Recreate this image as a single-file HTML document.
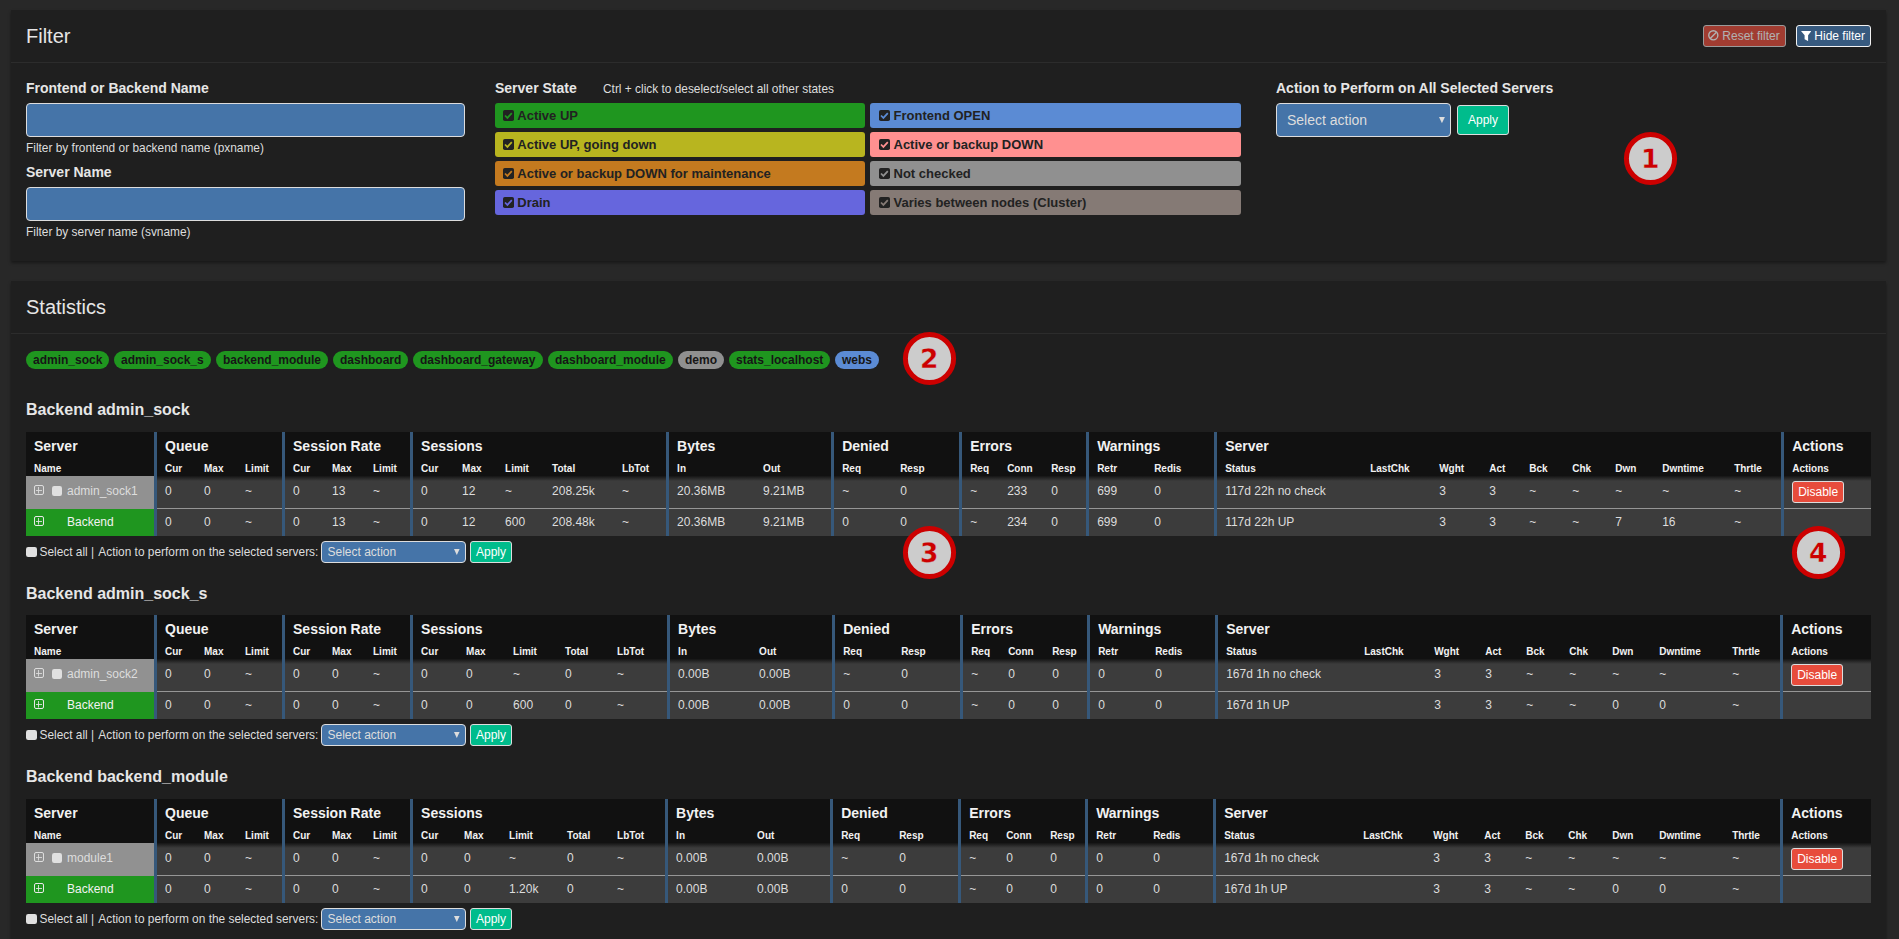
<!DOCTYPE html>
<html lang="en"><head><meta charset="utf-8"><title>HAProxy Statistics</title>
<style>
*{box-sizing:border-box}
html,body{margin:0;padding:0}
body{width:1899px;height:939px;overflow:hidden;position:relative;background:#282828;color:#ddd;
 font-family:"Liberation Sans",Arial,Helvetica,sans-serif;font-size:14px;line-height:20px}
.abs{position:absolute}
.panel{position:absolute;left:11px;width:1875px;background:#1f1f1f;box-shadow:0 2px 3px rgba(0,0,0,.4)}
.panel h3{position:absolute;left:15px;top:15px;margin:0;font-size:20px;line-height:22px;font-weight:400;color:#e6e6e6}
.panel .hr{position:absolute;left:0;right:0;top:52px;height:1px;background:#2c2c2c}
.lbl{position:absolute;font-weight:700;font-size:14px;line-height:20px;color:#e6e6e6;white-space:nowrap}
.help{position:absolute;font-size:11.9px;line-height:16px;color:#ddd;white-space:nowrap}
.inp{position:absolute;margin:0;padding:0 12px;outline:0;font:inherit;color:#ddd;background:#4574a8;border:1px solid #ddd;border-radius:4px}
.st{position:absolute;height:25px;border-radius:3px;font-weight:700;font-size:13px;line-height:25px;color:#222;white-space:nowrap}
.st svg{position:absolute;left:8px;top:7px}
.st span{position:absolute;left:22.3px;top:0}
.btn{position:absolute;margin:0;font-family:inherit;appearance:none;-webkit-appearance:none;cursor:pointer;border:1px solid #ddd;border-radius:3px;font-size:12px;line-height:18px;text-align:center;white-space:nowrap;color:#fff}
.badge{position:absolute;top:351px;height:18px;border-radius:10px;padding:3px 7px;font-size:12px;line-height:12px;font-weight:700;color:#161616;background:#1f961f;white-space:nowrap}
h4{position:absolute;left:26px;margin:0;font-size:16px;line-height:18px;font-weight:700;color:#e6e6e6;white-space:nowrap}
table{position:absolute;left:26px;width:1845px;border-collapse:separate;border-spacing:0;table-layout:fixed;font-size:12px;line-height:17px;color:#ddd}
th,td{padding:0 0 0 8px;text-align:left;white-space:nowrap;overflow:visible;vertical-align:top}
th{background:#111;color:#f2f2f2;font-weight:700}
tr.g th{height:24px;font-size:14px;line-height:20px;padding-top:3.7px}
tr.s th{height:20px;font-size:10px;line-height:14px;padding-top:6.4px}
td{background:#3c3c3c}
tr.r1 td{height:32px;padding-top:7px;background:linear-gradient(#151515,#3c3c3c 5px)}
tr.r2 td{height:28px;padding-top:6px;background-image:linear-gradient(#969696,#969696);background-size:100% 1px;background-repeat:no-repeat}
.b{border-left:3px solid #36587a;padding-left:8px}
tr.r1 td.nm{background:#919191;color:#ddd;padding-top:6.6px}
tr.r2 td.nm{background:#1f961f linear-gradient(#919191,#919191) 0 0/100% 1px no-repeat;color:#f2f2f2;padding-top:6px}
td.nm{position:relative}
td.nm span{position:absolute;left:41px}
td.nm svg{position:absolute;left:8px}
td.nm input{appearance:none;-webkit-appearance:none;margin:0;padding:0;border:0;position:absolute;left:25.5px;width:10.8px;height:10.7px;border-radius:2.2px;background:#e0e0e0}
td.ac{position:relative}
.sel{position:absolute;margin:0;padding:0;outline:0;font-family:inherit;appearance:none;-webkit-appearance:none;background:#4574a8;border:1px solid #ddd;border-radius:4px;color:#ddd;white-space:nowrap}
.cb{appearance:none;-webkit-appearance:none;margin:0;padding:0;border:0;position:absolute;width:10.7px;height:10.7px;border-radius:2.2px;background:#e0e0e0}
.foot{position:absolute;left:39.5px;font-size:11.9px;line-height:17px;color:#ddd;white-space:nowrap}
</style></head>
<body>
<div class="panel" style="top:10px;height:251px"><h3>Filter</h3><div class="hr"></div></div>
<button type="button" disabled class="btn" style="left:1703px;top:25px;width:83px;height:22px;padding:1px 0 1px 4.5px;text-align:left;background:#e74c3c;opacity:.65"><svg class="abs" style="left:4.1px;top:4.4px" width="10.6" height="10.6" viewBox="0 0 10.6 10.6"><circle cx="5.3" cy="5.3" r="4.55" fill="none" stroke="#fff" stroke-width="1.4"/><path d="M2.2 8.4L8.4 2.2" stroke="#fff" stroke-width="1.4"/></svg><span style="margin-left:13.8px">Reset filter</span></button>
<button type="button" class="btn" style="left:1796px;top:25px;width:75px;height:22px;padding:1px 0 1px 4px;text-align:left;background:#375a7f;border-color:#f2f2f2"><svg class="abs" style="left:4px;top:5px" width="10.3" height="10.1" viewBox="0 0 10.3 10.1"><path d="M0 0H10.3L7.1 4.3V10.1L3.6 8.2V4.3Z" fill="#fff"/></svg><span style="margin-left:13.3px">Hide filter</span></button>
<label class="lbl" style="left:26px;top:78px">Frontend or Backend Name</label>
<input type="text" class="inp" aria-label="Frontend or Backend Name" style="left:26px;top:103px;width:439px;height:34px">
<div class="help" style="left:26px;top:140px">Filter by frontend or backend name (pxname)</div>
<label class="lbl" style="left:26px;top:162px">Server Name</label>
<input type="text" class="inp" aria-label="Server Name" style="left:26px;top:187px;width:439px;height:34px">
<div class="help" style="left:26px;top:224px">Filter by server name (svname)</div>
<div class="lbl" style="left:495px;top:78px">Server State</div>
<div class="help" style="left:603px;top:81px">Ctrl + click to deselect/select all other states</div>
<div class="st" style="left:495px;top:103px;width:370px;background:#1f961f"><svg width="11" height="11" viewBox="0 0 11 11"><rect x="0" y="0" width="11" height="11" rx="1.8" fill="#222"/><path d="M2 5.5L4.4 7.9L8.8 3.2" stroke="#1f961f" stroke-width="1.75" fill="none"/></svg><span>Active UP</span></div>
<div class="st" style="left:495px;top:132px;width:370px;background:#b8b51f"><svg width="11" height="11" viewBox="0 0 11 11"><rect x="0" y="0" width="11" height="11" rx="1.8" fill="#222"/><path d="M2 5.5L4.4 7.9L8.8 3.2" stroke="#b8b51f" stroke-width="1.75" fill="none"/></svg><span>Active UP, going down</span></div>
<div class="st" style="left:495px;top:161px;width:370px;background:#c47a1f"><svg width="11" height="11" viewBox="0 0 11 11"><rect x="0" y="0" width="11" height="11" rx="1.8" fill="#222"/><path d="M2 5.5L4.4 7.9L8.8 3.2" stroke="#c47a1f" stroke-width="1.75" fill="none"/></svg><span>Active or backup DOWN for maintenance</span></div>
<div class="st" style="left:495px;top:190px;width:370px;background:#6666dd"><svg width="11" height="11" viewBox="0 0 11 11"><rect x="0" y="0" width="11" height="11" rx="1.8" fill="#222"/><path d="M2 5.5L4.4 7.9L8.8 3.2" stroke="#6666dd" stroke-width="1.75" fill="none"/></svg><span>Drain</span></div>
<div class="st" style="left:870px;top:103px;width:371px;background:#5b8bd4"><svg style="left:8.6px" width="11" height="11" viewBox="0 0 11 11"><rect x="0" y="0" width="11" height="11" rx="1.8" fill="#222"/><path d="M2 5.5L4.4 7.9L8.8 3.2" stroke="#5b8bd4" stroke-width="1.75" fill="none"/></svg><span style="left:23.5px">Frontend OPEN</span></div>
<div class="st" style="left:870px;top:132px;width:371px;background:#ff9090"><svg style="left:8.6px" width="11" height="11" viewBox="0 0 11 11"><rect x="0" y="0" width="11" height="11" rx="1.8" fill="#222"/><path d="M2 5.5L4.4 7.9L8.8 3.2" stroke="#ff9090" stroke-width="1.75" fill="none"/></svg><span style="left:23.5px">Active or backup DOWN</span></div>
<div class="st" style="left:870px;top:161px;width:371px;background:#909090"><svg style="left:8.6px" width="11" height="11" viewBox="0 0 11 11"><rect x="0" y="0" width="11" height="11" rx="1.8" fill="#222"/><path d="M2 5.5L4.4 7.9L8.8 3.2" stroke="#909090" stroke-width="1.75" fill="none"/></svg><span style="left:23.5px">Not checked</span></div>
<div class="st" style="left:870px;top:190px;width:371px;background:#857a75"><svg style="left:8.6px" width="11" height="11" viewBox="0 0 11 11"><rect x="0" y="0" width="11" height="11" rx="1.8" fill="#222"/><path d="M2 5.5L4.4 7.9L8.8 3.2" stroke="#857a75" stroke-width="1.75" fill="none"/></svg><span style="left:23.5px">Varies between nodes (Cluster)</span></div>
<div class="lbl" style="left:1276px;top:78px">Action to Perform on All Selected Servers</div>
<select class="sel" style="left:1276px;top:103px;width:175px;height:34px;font-size:14px;line-height:32px;padding-left:10px"><option>Select action</option></select><svg class="abs" style="left:1439.2px;top:116.8px;pointer-events:none" width="5.9" height="6.2" viewBox="0 0 59 62"><path d="M0 0H59L29.5 62Z" fill="#ddd"/></svg>
<button type="button" class="btn" style="left:1457px;top:105px;width:52px;height:30px;padding:5px 0;background:#00bc8c">Apply</button>
<div class="panel" style="top:281px;height:700px"><h3>Statistics</h3><div class="hr"></div></div>
<div class="badge" style="left:26px;width:83px;background:#1f961f">admin_sock</div>
<div class="badge" style="left:114px;width:97px;background:#1f961f">admin_sock_s</div>
<div class="badge" style="left:216px;width:112px;background:#1f961f">backend_module</div>
<div class="badge" style="left:333px;width:75px;background:#1f961f">dashboard</div>
<div class="badge" style="left:413px;width:130px;background:#1f961f">dashboard_gateway</div>
<div class="badge" style="left:548px;width:125px;background:#1f961f">dashboard_module</div>
<div class="badge" style="left:678px;width:46px;background:#909090">demo</div>
<div class="badge" style="left:729px;width:101px;background:#1f961f">stats_localhost</div>
<div class="badge" style="left:835px;width:44px;background:#5b8bd4">webs</div>
<h4 style="top:401px">Backend admin_sock</h4>
<table style="top:432px"><colgroup>
<col style="width:128px">
<col style="width:42px">
<col style="width:41px">
<col style="width:45px">
<col style="width:42px">
<col style="width:41px">
<col style="width:45px">
<col style="width:44px">
<col style="width:43px">
<col style="width:47px">
<col style="width:70px">
<col style="width:52px">
<col style="width:89px">
<col style="width:76px">
<col style="width:61px">
<col style="width:67px">
<col style="width:40px">
<col style="width:44px">
<col style="width:43px">
<col style="width:60px">
<col style="width:68px">
<col style="width:148px">
<col style="width:69px">
<col style="width:50px">
<col style="width:40px">
<col style="width:43px">
<col style="width:43px">
<col style="width:47px">
<col style="width:72px">
<col style="width:55px">
<col style="width:90px">
</colgroup><thead><tr class="g">
<th colspan="1">Server</th>
<th colspan="3" class="b">Queue</th>
<th colspan="3" class="b">Session Rate</th>
<th colspan="5" class="b">Sessions</th>
<th colspan="2" class="b">Bytes</th>
<th colspan="2" class="b">Denied</th>
<th colspan="3" class="b">Errors</th>
<th colspan="2" class="b">Warnings</th>
<th colspan="9" class="b">Server</th>
<th colspan="1" class="b">Actions</th>
</tr><tr class="s">
<th>Name</th>
<th class="b">Cur</th>
<th>Max</th>
<th>Limit</th>
<th class="b">Cur</th>
<th>Max</th>
<th>Limit</th>
<th class="b">Cur</th>
<th>Max</th>
<th>Limit</th>
<th>Total</th>
<th>LbTot</th>
<th class="b">In</th>
<th>Out</th>
<th class="b">Req</th>
<th>Resp</th>
<th class="b">Req</th>
<th>Conn</th>
<th>Resp</th>
<th class="b">Retr</th>
<th>Redis</th>
<th class="b">Status</th>
<th>LastChk</th>
<th>Wght</th>
<th>Act</th>
<th>Bck</th>
<th>Chk</th>
<th>Dwn</th>
<th>Dwntime</th>
<th>Thrtle</th>
<th class="b">Actions</th>
</tr></thead><tbody>
<tr class="r1">
<td class="nm"><svg style="top:9px" width="10" height="10" viewBox="0 0 10 10"><rect x="0.5" y="0.5" width="9" height="9" rx="1.5" fill="none" stroke="#ddd" stroke-width="1"/><path d="M4.5 2V8.5M2 5.5H8" stroke="#ddd" stroke-width="1" fill="none" opacity=".85"/></svg><input type="checkbox" style="top:9.3px"><span>admin_sock1</span></td>
<td class="b">0</td>
<td>0</td>
<td>~</td>
<td class="b">0</td>
<td>13</td>
<td>~</td>
<td class="b">0</td>
<td>12</td>
<td>~</td>
<td>208.25k</td>
<td>~</td>
<td class="b">20.36MB</td>
<td>9.21MB</td>
<td class="b">~</td>
<td>0</td>
<td class="b">~</td>
<td>233</td>
<td>0</td>
<td class="b">699</td>
<td>0</td>
<td class="b">117d 22h no check</td>
<td></td>
<td>3</td>
<td>3</td>
<td>~</td>
<td>~</td>
<td>~</td>
<td>~</td>
<td>~</td>
<td class="b ac"><button type="button" class="btn" style="left:8px;top:5px;width:52px;height:22px;padding:1px 0;background:#e74c3c">Disable</button></td>
</tr>
<tr class="r2">
<td class="nm"><svg style="top:8px" width="10" height="10" viewBox="0 0 10 10"><rect x="0.5" y="0.5" width="9" height="9" rx="1.5" fill="none" stroke="#e8e8e8" stroke-width="1"/><path d="M4.5 2V8.5M2 5.5H8" stroke="#e8e8e8" stroke-width="1" fill="none" opacity=".85"/></svg><span>Backend</span></td>
<td class="b">0</td>
<td>0</td>
<td>~</td>
<td class="b">0</td>
<td>13</td>
<td>~</td>
<td class="b">0</td>
<td>12</td>
<td>600</td>
<td>208.48k</td>
<td>~</td>
<td class="b">20.36MB</td>
<td>9.21MB</td>
<td class="b">0</td>
<td>0</td>
<td class="b">~</td>
<td>234</td>
<td>0</td>
<td class="b">699</td>
<td>0</td>
<td class="b">117d 22h UP</td>
<td></td>
<td>3</td>
<td>3</td>
<td>~</td>
<td>~</td>
<td>7</td>
<td>16</td>
<td>~</td>
<td class="b ac"></td>
</tr>
</tbody></table>
<input type="checkbox" class="cb" style="left:26px;top:546.7px">
<div class="foot" style="top:544px">Select all | <span style="padding-left:.8px">Action</span> to perform on the selected servers:</div>
<select class="sel" style="left:321px;top:541px;width:145px;height:22px;font-size:12px;line-height:20px;padding-left:5.5px"><option>Select action</option></select><svg class="abs" style="left:454.2px;top:548.9px;pointer-events:none" width="5.6" height="6.1" viewBox="0 0 56 61"><path d="M0 0H56L28 61Z" fill="#ddd"/></svg>
<button type="button" class="btn" style="left:470px;top:541px;width:42px;height:22px;padding:1px 0;background:#00bc8c">Apply</button>
<h4 style="top:585px">Backend admin_sock_s</h4>
<table style="top:615px"><colgroup>
<col style="width:128px">
<col style="width:42px">
<col style="width:41px">
<col style="width:45px">
<col style="width:42px">
<col style="width:41px">
<col style="width:45px">
<col style="width:48px">
<col style="width:47px">
<col style="width:52px">
<col style="width:52px">
<col style="width:58px">
<col style="width:84px">
<col style="width:81px">
<col style="width:61px">
<col style="width:67px">
<col style="width:40px">
<col style="width:44px">
<col style="width:43px">
<col style="width:60px">
<col style="width:68px">
<col style="width:141px">
<col style="width:70px">
<col style="width:51px">
<col style="width:41px">
<col style="width:43px">
<col style="width:43px">
<col style="width:47px">
<col style="width:73px">
<col style="width:56px">
<col style="width:91px">
</colgroup><thead><tr class="g">
<th colspan="1">Server</th>
<th colspan="3" class="b">Queue</th>
<th colspan="3" class="b">Session Rate</th>
<th colspan="5" class="b">Sessions</th>
<th colspan="2" class="b">Bytes</th>
<th colspan="2" class="b">Denied</th>
<th colspan="3" class="b">Errors</th>
<th colspan="2" class="b">Warnings</th>
<th colspan="9" class="b">Server</th>
<th colspan="1" class="b">Actions</th>
</tr><tr class="s">
<th>Name</th>
<th class="b">Cur</th>
<th>Max</th>
<th>Limit</th>
<th class="b">Cur</th>
<th>Max</th>
<th>Limit</th>
<th class="b">Cur</th>
<th>Max</th>
<th>Limit</th>
<th>Total</th>
<th>LbTot</th>
<th class="b">In</th>
<th>Out</th>
<th class="b">Req</th>
<th>Resp</th>
<th class="b">Req</th>
<th>Conn</th>
<th>Resp</th>
<th class="b">Retr</th>
<th>Redis</th>
<th class="b">Status</th>
<th>LastChk</th>
<th>Wght</th>
<th>Act</th>
<th>Bck</th>
<th>Chk</th>
<th>Dwn</th>
<th>Dwntime</th>
<th>Thrtle</th>
<th class="b">Actions</th>
</tr></thead><tbody>
<tr class="r1">
<td class="nm"><svg style="top:9px" width="10" height="10" viewBox="0 0 10 10"><rect x="0.5" y="0.5" width="9" height="9" rx="1.5" fill="none" stroke="#ddd" stroke-width="1"/><path d="M4.5 2V8.5M2 5.5H8" stroke="#ddd" stroke-width="1" fill="none" opacity=".85"/></svg><input type="checkbox" style="top:9.3px"><span>admin_sock2</span></td>
<td class="b">0</td>
<td>0</td>
<td>~</td>
<td class="b">0</td>
<td>0</td>
<td>~</td>
<td class="b">0</td>
<td>0</td>
<td>~</td>
<td>0</td>
<td>~</td>
<td class="b">0.00B</td>
<td>0.00B</td>
<td class="b">~</td>
<td>0</td>
<td class="b">~</td>
<td>0</td>
<td>0</td>
<td class="b">0</td>
<td>0</td>
<td class="b">167d 1h no check</td>
<td></td>
<td>3</td>
<td>3</td>
<td>~</td>
<td>~</td>
<td>~</td>
<td>~</td>
<td>~</td>
<td class="b ac"><button type="button" class="btn" style="left:8px;top:5px;width:52px;height:22px;padding:1px 0;background:#e74c3c">Disable</button></td>
</tr>
<tr class="r2">
<td class="nm"><svg style="top:8px" width="10" height="10" viewBox="0 0 10 10"><rect x="0.5" y="0.5" width="9" height="9" rx="1.5" fill="none" stroke="#e8e8e8" stroke-width="1"/><path d="M4.5 2V8.5M2 5.5H8" stroke="#e8e8e8" stroke-width="1" fill="none" opacity=".85"/></svg><span>Backend</span></td>
<td class="b">0</td>
<td>0</td>
<td>~</td>
<td class="b">0</td>
<td>0</td>
<td>~</td>
<td class="b">0</td>
<td>0</td>
<td>600</td>
<td>0</td>
<td>~</td>
<td class="b">0.00B</td>
<td>0.00B</td>
<td class="b">0</td>
<td>0</td>
<td class="b">~</td>
<td>0</td>
<td>0</td>
<td class="b">0</td>
<td>0</td>
<td class="b">167d 1h UP</td>
<td></td>
<td>3</td>
<td>3</td>
<td>~</td>
<td>~</td>
<td>0</td>
<td>0</td>
<td>~</td>
<td class="b ac"></td>
</tr>
</tbody></table>
<input type="checkbox" class="cb" style="left:26px;top:729.7px">
<div class="foot" style="top:727px">Select all | <span style="padding-left:.8px">Action</span> to perform on the selected servers:</div>
<select class="sel" style="left:321px;top:724px;width:145px;height:22px;font-size:12px;line-height:20px;padding-left:5.5px"><option>Select action</option></select><svg class="abs" style="left:454.2px;top:731.9px;pointer-events:none" width="5.6" height="6.1" viewBox="0 0 56 61"><path d="M0 0H56L28 61Z" fill="#ddd"/></svg>
<button type="button" class="btn" style="left:470px;top:724px;width:42px;height:22px;padding:1px 0;background:#00bc8c">Apply</button>
<h4 style="top:768px">Backend backend_module</h4>
<table style="top:799px"><colgroup>
<col style="width:128px">
<col style="width:42px">
<col style="width:41px">
<col style="width:45px">
<col style="width:42px">
<col style="width:41px">
<col style="width:45px">
<col style="width:46px">
<col style="width:45px">
<col style="width:58px">
<col style="width:50px">
<col style="width:56px">
<col style="width:84px">
<col style="width:81px">
<col style="width:61px">
<col style="width:67px">
<col style="width:40px">
<col style="width:44px">
<col style="width:43px">
<col style="width:60px">
<col style="width:68px">
<col style="width:142px">
<col style="width:70px">
<col style="width:51px">
<col style="width:41px">
<col style="width:43px">
<col style="width:44px">
<col style="width:47px">
<col style="width:73px">
<col style="width:56px">
<col style="width:91px">
</colgroup><thead><tr class="g">
<th colspan="1">Server</th>
<th colspan="3" class="b">Queue</th>
<th colspan="3" class="b">Session Rate</th>
<th colspan="5" class="b">Sessions</th>
<th colspan="2" class="b">Bytes</th>
<th colspan="2" class="b">Denied</th>
<th colspan="3" class="b">Errors</th>
<th colspan="2" class="b">Warnings</th>
<th colspan="9" class="b">Server</th>
<th colspan="1" class="b">Actions</th>
</tr><tr class="s">
<th>Name</th>
<th class="b">Cur</th>
<th>Max</th>
<th>Limit</th>
<th class="b">Cur</th>
<th>Max</th>
<th>Limit</th>
<th class="b">Cur</th>
<th>Max</th>
<th>Limit</th>
<th>Total</th>
<th>LbTot</th>
<th class="b">In</th>
<th>Out</th>
<th class="b">Req</th>
<th>Resp</th>
<th class="b">Req</th>
<th>Conn</th>
<th>Resp</th>
<th class="b">Retr</th>
<th>Redis</th>
<th class="b">Status</th>
<th>LastChk</th>
<th>Wght</th>
<th>Act</th>
<th>Bck</th>
<th>Chk</th>
<th>Dwn</th>
<th>Dwntime</th>
<th>Thrtle</th>
<th class="b">Actions</th>
</tr></thead><tbody>
<tr class="r1">
<td class="nm"><svg style="top:9px" width="10" height="10" viewBox="0 0 10 10"><rect x="0.5" y="0.5" width="9" height="9" rx="1.5" fill="none" stroke="#ddd" stroke-width="1"/><path d="M4.5 2V8.5M2 5.5H8" stroke="#ddd" stroke-width="1" fill="none" opacity=".85"/></svg><input type="checkbox" style="top:9.3px"><span>module1</span></td>
<td class="b">0</td>
<td>0</td>
<td>~</td>
<td class="b">0</td>
<td>0</td>
<td>~</td>
<td class="b">0</td>
<td>0</td>
<td>~</td>
<td>0</td>
<td>~</td>
<td class="b">0.00B</td>
<td>0.00B</td>
<td class="b">~</td>
<td>0</td>
<td class="b">~</td>
<td>0</td>
<td>0</td>
<td class="b">0</td>
<td>0</td>
<td class="b">167d 1h no check</td>
<td></td>
<td>3</td>
<td>3</td>
<td>~</td>
<td>~</td>
<td>~</td>
<td>~</td>
<td>~</td>
<td class="b ac"><button type="button" class="btn" style="left:8px;top:5px;width:52px;height:22px;padding:1px 0;background:#e74c3c">Disable</button></td>
</tr>
<tr class="r2">
<td class="nm"><svg style="top:8px" width="10" height="10" viewBox="0 0 10 10"><rect x="0.5" y="0.5" width="9" height="9" rx="1.5" fill="none" stroke="#e8e8e8" stroke-width="1"/><path d="M4.5 2V8.5M2 5.5H8" stroke="#e8e8e8" stroke-width="1" fill="none" opacity=".85"/></svg><span>Backend</span></td>
<td class="b">0</td>
<td>0</td>
<td>~</td>
<td class="b">0</td>
<td>0</td>
<td>~</td>
<td class="b">0</td>
<td>0</td>
<td>1.20k</td>
<td>0</td>
<td>~</td>
<td class="b">0.00B</td>
<td>0.00B</td>
<td class="b">0</td>
<td>0</td>
<td class="b">~</td>
<td>0</td>
<td>0</td>
<td class="b">0</td>
<td>0</td>
<td class="b">167d 1h UP</td>
<td></td>
<td>3</td>
<td>3</td>
<td>~</td>
<td>~</td>
<td>0</td>
<td>0</td>
<td>~</td>
<td class="b ac"></td>
</tr>
</tbody></table>
<input type="checkbox" class="cb" style="left:26px;top:913.7px">
<div class="foot" style="top:911px">Select all | <span style="padding-left:.8px">Action</span> to perform on the selected servers:</div>
<select class="sel" style="left:321px;top:908px;width:145px;height:22px;font-size:12px;line-height:20px;padding-left:5.5px"><option>Select action</option></select><svg class="abs" style="left:454.2px;top:915.9px;pointer-events:none" width="5.6" height="6.1" viewBox="0 0 56 61"><path d="M0 0H56L28 61Z" fill="#ddd"/></svg>
<button type="button" class="btn" style="left:470px;top:908px;width:42px;height:22px;padding:1px 0;background:#00bc8c">Apply</button>
<svg class="abs" style="left:1622px;top:130px" width="57" height="57" viewBox="0 0 57 57"><circle cx="28.5" cy="28.5" r="24.1" fill="#ccc" stroke="#c00" stroke-width="5"/><text x="28.2" y="38.3" text-anchor="middle" font-family="DejaVu Sans, sans-serif" font-weight="700" font-size="26.5" text-rendering="geometricPrecision" fill="#c00" stroke="#ccc" stroke-width=".3">1</text></svg>
<svg class="abs" style="left:901px;top:330px" width="57" height="57" viewBox="0 0 57 57"><circle cx="28.5" cy="28.5" r="24.1" fill="#ccc" stroke="#c00" stroke-width="5"/><text x="28.2" y="38.3" text-anchor="middle" font-family="DejaVu Sans, sans-serif" font-weight="700" font-size="26.5" text-rendering="geometricPrecision" fill="#c00" stroke="#ccc" stroke-width=".3">2</text></svg>
<svg class="abs" style="left:901px;top:524px" width="57" height="57" viewBox="0 0 57 57"><circle cx="28.5" cy="28.5" r="24.1" fill="#ccc" stroke="#c00" stroke-width="5"/><text x="28.2" y="38.3" text-anchor="middle" font-family="DejaVu Sans, sans-serif" font-weight="700" font-size="26.5" text-rendering="geometricPrecision" fill="#c00" stroke="#ccc" stroke-width=".3">3</text></svg>
<svg class="abs" style="left:1790px;top:524px" width="57" height="57" viewBox="0 0 57 57"><circle cx="28.5" cy="28.5" r="24.1" fill="#ccc" stroke="#c00" stroke-width="5"/><text x="28.2" y="38.3" text-anchor="middle" font-family="DejaVu Sans, sans-serif" font-weight="700" font-size="26.5" text-rendering="geometricPrecision" fill="#c00" stroke="#ccc" stroke-width=".3">4</text></svg>
</body></html>
